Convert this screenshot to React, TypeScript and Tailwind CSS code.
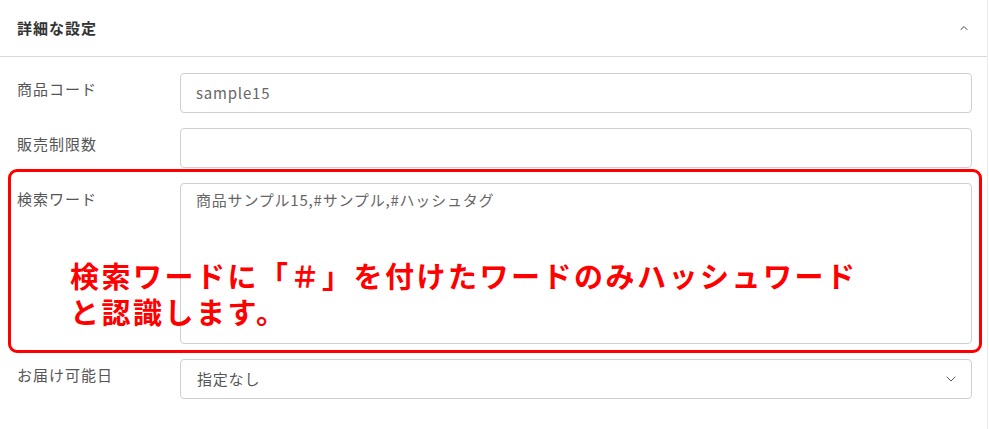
import { ChevronDown, ChevronUp } from "lucide-react";

const font = "font-['Noto_Sans_CJK_JP','Noto_Sans',sans-serif]";

function Row({ label, children }: { label: string; children: React.ReactNode }) {
  return (
    <div className="grid grid-cols-[163px_1fr]">
      <div className="pt-[5px] text-[15px] leading-[22px] tracking-[1px] text-[#555]">{label}</div>
      {children}
    </div>
  );
}

export default function App() {
  return (
    <div className={`relative w-[989px] h-[429px] bg-white overflow-hidden ${font}`}>
      <div className="w-[988px] h-full border-r border-[#ececec]">
        <div className="h-[57px] flex items-center justify-between pl-[17px] pr-[17px] border-b border-[#d9d9d9]">
          <span className="text-[15px] font-bold tracking-[1px] text-[#333]">詳細な設定</span>
          <ChevronUp size={12} strokeWidth={2} className="text-[#444]" />
        </div>

        <div className="flex flex-col gap-[15px] pt-4 pl-[17px] pr-[15px]">
          <Row label="商品コード">
            <div className="h-10 flex items-center px-[15px] border border-[#ccd0d2] rounded text-[15px] tracking-[0.8px] text-[#666]">
              sample15
            </div>
          </Row>
          <Row label="販売制限数">
            <div className="h-10 border border-[#ccd0d2] rounded" />
          </Row>
          <Row label="検索ワード">
            <div className="h-[161px] px-[15px] pt-[5px] border border-[#ccd0d2] rounded text-[15px] leading-[22px] tracking-[0.8px] text-[#666]">
              商品サンプル15,#サンプル,#ハッシュタグ
            </div>
          </Row>
          <Row label="お届け可能日">
            <div className="h-10 flex items-center justify-between pl-[16px] pr-[12px] border border-[#ccd0d2] rounded text-[15px] tracking-[0.8px] text-[#555]">
              <span>指定なし</span>
              <ChevronDown size={16} strokeWidth={1.5} className="text-[#555]" />
            </div>
          </Row>
        </div>
      </div>

      {/* annotation overlay */}
      <div className="absolute left-[8px] top-[169px] w-[974px] h-[184px] border-[3px] border-[#ff0000] rounded-[9px]" />
      <div className="absolute left-[70px] top-[257px] text-[#ff0000] font-bold text-[29px] leading-[36px] tracking-[2.5px]">
        <p>検索ワードに「＃」を付けたワードのみハッシュワード</p>
        <p>と認識します。</p>
      </div>
    </div>
  );
}
